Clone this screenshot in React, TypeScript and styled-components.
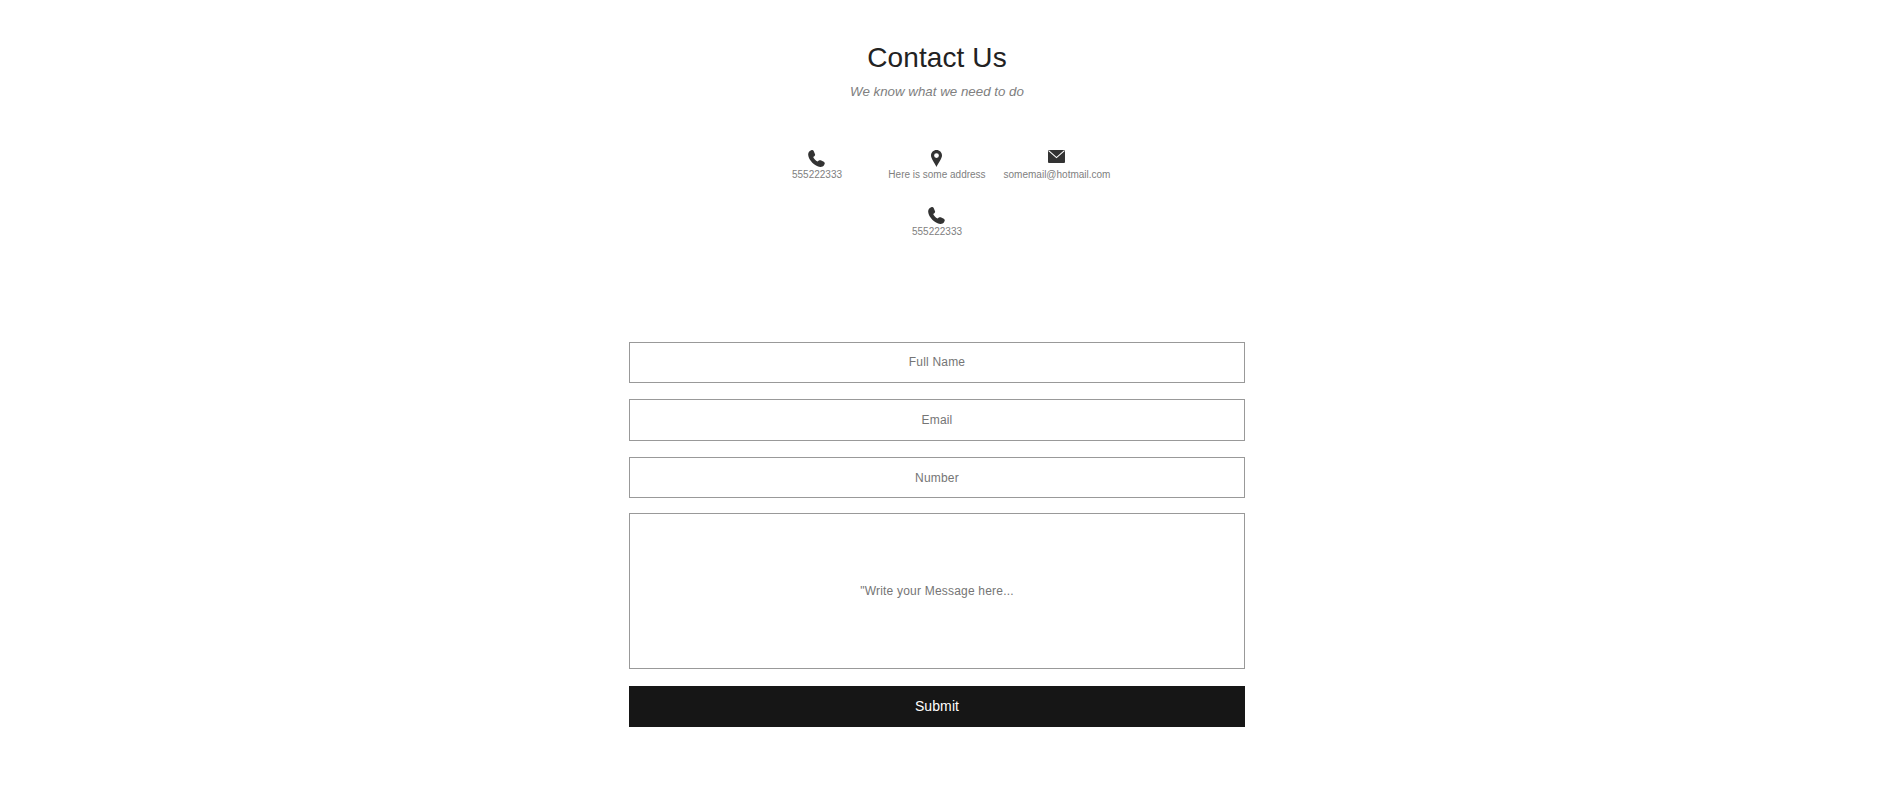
import React from 'react';
import styled, { createGlobalStyle } from 'styled-components';

const GlobalStyle = createGlobalStyle`
	html, body {
		margin: 0;
		padding: 0;
		background: #fff;
		font-family: 'Liberation Sans', Arial, sans-serif;
	}
	* {
		box-sizing: border-box;
	}
`;

const PhoneIcon = () => (
	<svg width="17" height="17" viewBox="0 0 17 17" fill="currentColor">
		<path d="M3.2.2C4.4-.2 5.4.2 5.8 1.2L7 4.2C7.3 5 7 5.7 6.3 6.2L5.2 7C5.8 8.6 7.6 10.8 9.6 11.6L10.8 10.6C11.4 10.1 12.1 10 12.8 10.3L15.8 11.8C16.7 12.3 17 13.2 16.6 14L16 15.2C15.3 16.4 13.9 17 12.2 16.9C6.8 16.4.6 10 .2 5C0 3 .8 1.2 3.2.2Z" />
	</svg>
);

const PinIcon = () => (
	<svg width="11" height="17" viewBox="0 0 11 17" fill="currentColor">
		<path
			fillRule="evenodd"
			d="M5.5 0C2.4 0 0 2.4 0 5.5 0 8.8 3.8 12.8 5.5 17 7.2 12.8 11 8.8 11 5.5 11 2.4 8.6 0 5.5 0ZM5.5 3.2a2.4 2.4 0 1 1 0 4.8 2.4 2.4 0 0 1 0-4.8Z"
		/>
	</svg>
);

const MailIcon = () => (
	<svg width="17" height="13" viewBox="0 0 17 13" fill="currentColor">
		<rect width="17" height="13" rx="1" />
		<path d="M.6.6L8.5 7.6 16.4.6" fill="none" stroke="#fff" strokeWidth="1.1" />
	</svg>
);

const contactItems = [
	{ icon: <PhoneIcon />, text: '555222333' },
	{ icon: <PinIcon />, text: 'Here is some address' },
	{ icon: <MailIcon />, text: 'somemail@hotmail.com' },
	{ icon: <PhoneIcon />, text: '555222333' },
];

const App = () => (
	<Page>
		<GlobalStyle />
		<Title>Contact Us</Title>
		<Subtitle>We know what we need to do</Subtitle>
		<ContactList>
			{contactItems.map((item, i) => (
				<ContactItem key={i}>
					<IconBox>{item.icon}</IconBox>
					<ContactText>{item.text}</ContactText>
				</ContactItem>
			))}
		</ContactList>
		<Form onSubmit={(e) => e.preventDefault()}>
			<Field type="text" placeholder="Full Name" />
			<Field type="email" placeholder="Email" />
			<Field type="text" placeholder="Number" />
			<MessageField placeholder={'"Write your Message here...'} />
			<SubmitButton type="submit">Submit</SubmitButton>
		</Form>
	</Page>
);

const Page = styled.div`
	display: flex;
	flex-direction: column;
	align-items: center;
	min-height: 807px;
	padding: 42px 9px 0 0;
	background: #fff;
`;

const Title = styled.h2`
	margin: 0;
	font-size: 28px;
	line-height: 32px;
	font-weight: 400;
	letter-spacing: 0.1px;
	color: #222;
`;

const Subtitle = styled.p`
	margin: 10px 0 0;
	font-size: 13.33px;
	line-height: 16px;
	font-style: italic;
	color: #808080;
`;

const ContactList = styled.div`
	display: flex;
	flex-wrap: wrap;
	justify-content: center;
	width: 360px;
	margin-top: 50px;
	row-gap: 26px;
`;

const ContactItem = styled.div`
	display: flex;
	flex-direction: column;
	align-items: center;
	width: 120px;
`;

const IconBox = styled.div`
	display: flex;
	align-items: flex-start;
	justify-content: center;
	height: 17px;
	padding-right: 1px;
	color: #333;
`;

const ContactText = styled.span`
	margin-top: 2px;
	font-size: 10px;
	line-height: 12px;
	white-space: nowrap;
	color: #808080;
`;

const Form = styled.form`
	display: flex;
	flex-direction: column;
	width: 616px;
	margin-top: 103.8px;
`;

const Field = styled.input`
	display: block;
	width: 100%;
	height: 41.3px;
	margin-bottom: 16.3px;
	padding: 0 12px;
	border: 1px solid #999;
	border-radius: 0;
	outline: none;
	background: #fff;
	font-family: inherit;
	font-size: 12px;
	letter-spacing: 0.2px;
	text-align: center;
	color: #333;

	&::placeholder {
		color: #757575;
		opacity: 1;
	}
`;

const MessageField = styled.textarea`
	display: block;
	width: 100%;
	height: 156px;
	margin-top: -1.8px;
	margin-bottom: 17px;
	padding: 70px 12px 0;
	border: 1px solid #999;
	border-radius: 0;
	outline: none;
	resize: none;
	background: #fff;
	font-family: inherit;
	font-size: 12px;
	line-height: 14px;
	letter-spacing: 0.2px;
	text-align: center;
	color: #333;

	&::placeholder {
		color: #757575;
		opacity: 1;
	}
`;

const SubmitButton = styled.button`
	display: block;
	width: 100%;
	height: 41px;
	border: 0;
	border-radius: 0;
	background: #161616;
	font-family: inherit;
	font-size: 14px;
	letter-spacing: 0.1px;
	color: #fff;
	cursor: pointer;
`;

export default App;
